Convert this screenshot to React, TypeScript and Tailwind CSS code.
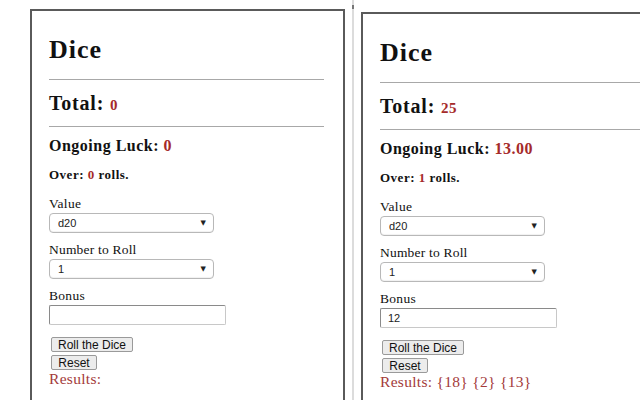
import React from "react";

interface DicePanelProps {
  total: string;
  luck: string;
  rolls: string;
  bonus: string;
  results: string;
  top: string;
}

function SelectBox({ value }: { value: string }) {
  return (
    <div className="mt-[3px] flex h-[20px] w-[165px] items-center justify-between rounded-[4px] border border-[#b8b8b8] bg-white pl-[8px] pr-[7px] shadow-[inset_0_-1px_1px_rgba(0,0,0,0.06)]">
      <span className="font-['Liberation_Sans',Arial,sans-serif] text-[11px] leading-none text-[#222]">
        {value}
      </span>
      <span className="font-['DejaVu_Sans',sans-serif] text-[7px] leading-none text-[#222]">▼</span>
    </div>
  );
}

function DicePanel({ total, luck, rolls, bonus, results, top }: DicePanelProps) {
  return (
    <div
      className={`${top} h-[420px] w-[315px] shrink-0 border-2 border-[#5a5a5a] bg-white pl-[17px] pr-[19px] font-['Liberation_Serif','Times_New_Roman',serif] text-[#111]`}
    >
      <h1 className="mt-[27px] text-[26px] font-bold leading-[24px] tracking-[1px]">Dice</h1>
      <div className="mt-[17px] h-0 border-t border-[#a8a8a8]" />
      <h2 className="mt-[14px] text-[20px] font-bold leading-[18px] tracking-[0.8px]">
        Total: <span className="text-[15px] tracking-[0.5px] text-[#a52a2a]">{total}</span>
      </h2>
      <div className="mt-[12px] h-0 border-t border-[#a8a8a8]" />
      <h3 className="mt-[11px] text-[16px] font-bold leading-[15px] tracking-[0.5px]">
        Ongoing Luck: <span className="text-[#a52a2a]">{luck}</span>
      </h3>
      <p className="mt-[16px] text-[13px] font-bold leading-[12px] tracking-[0.5px]">
        Over: <span className="text-[#a52a2a]">{rolls}</span> rolls.
      </p>
      <p className="mt-[16px] text-[13.5px] leading-[13px] tracking-[0.3px]">Value</p>
      <SelectBox value="d20" />
      <p className="mt-[10px] text-[13.5px] leading-[13px] tracking-[0.2px]">Number to Roll</p>
      <SelectBox value="1" />
      <p className="mt-[10px] text-[13.5px] leading-[13px] tracking-[0.3px]">Bonus</p>
      <div className="mt-[3px] flex h-[20px] w-[177px] items-center rounded-[2px] border border-[#c8c8c8] border-l-[#8a8a8a] border-t-[#8a8a8a] bg-white pl-[7px]">
        <span className="font-['Liberation_Sans',Arial,sans-serif] text-[11px] leading-none text-[#222]">
          {bonus}
        </span>
      </div>
      <div className="ml-[2px] mt-[12px] flex flex-col items-start gap-[3px] font-['Liberation_Sans',Arial,sans-serif] text-[12px] leading-none text-[#111]">
        <button className="h-[15px] w-[82px] rounded-[2px] border border-[#9a9a9a] bg-[#ececec]">
          Roll the Dice
        </button>
        <button className="h-[15px] w-[46px] rounded-[2px] border border-[#9a9a9a] bg-[#ececec]">
          Reset
        </button>
      </div>
      <p className="mt-[1px] text-[15.5px] leading-[15px] tracking-[0.3px] text-[#a33a3a]">Results: {results}</p>
    </div>
  );
}

export default function App() {
  return (
    <div className="flex h-[400px] w-[640px] overflow-hidden bg-white pl-[30px]">
      <DicePanel total="0" luck="0" rolls="0" bonus="" results="" top="mt-[9px]" />
      <div className="ml-[7px] flex w-[2px] shrink-0 flex-col bg-[#dcdcdc]">
        <div className="mt-[5px] h-[4px] w-[2px] bg-[#777]" />
      </div>
      <DicePanel
        total="25"
        luck="13.00"
        rolls="1"
        bonus="12"
        results="{18} {2} {13}"
        top="mt-[12px] ml-[7px]"
      />
    </div>
  );
}
